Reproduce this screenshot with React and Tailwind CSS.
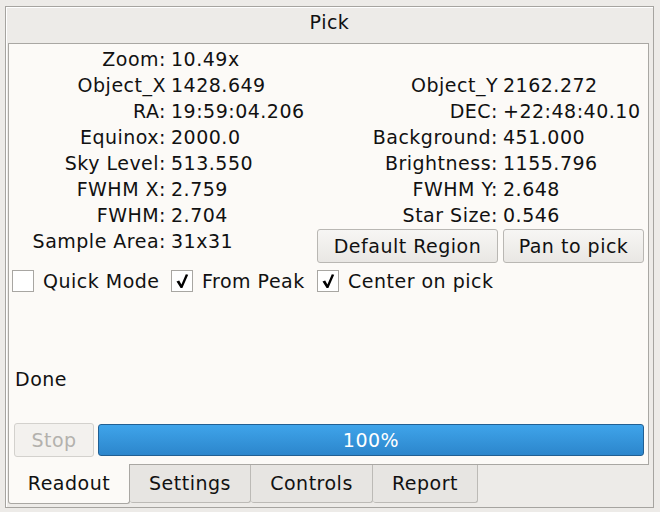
import React from "react";

const rows = [
  ["Zoom:", "10.49x", "", ""],
  ["Object_X", "1428.649", "Object_Y", "2162.272"],
  ["RA:", "19:59:04.206", "DEC:", "+22:48:40.10"],
  ["Equinox:", "2000.0", "Background:", "451.000"],
  ["Sky Level:", "513.550", "Brightness:", "1155.796"],
  ["FWHM X:", "2.759", "FWHM Y:", "2.648"],
  ["FWHM:", "2.704", "Star Size:", "0.546"],
];

function CheckBox({ checked, label }) {
  return (
    <div className="h-[22px] leading-[22px] flex items-center gap-[9px]">
      <div className="w-[22px] h-[22px] border border-[#a8a6a2] bg-white flex items-center justify-center">
        {checked && (
          <svg width="20" height="20" viewBox="0 0 20 20">
            <path d="M4.5 10.5 L7.2 9.6 L9.4 13.6 L13.8 3.2 L16.2 3.8 L10.4 17 L8.6 17 Z" fill="#000" />
          </svg>
        )}
      </div>
      <span>{label}</span>
    </div>
  );
}

function Button({ children, className = "" }) {
  return (
    <div
      className={`h-[34px] flex items-center justify-center rounded-[3px] border border-[#b9b7b3] bg-gradient-to-b from-[#f7f6f4] to-[#e9e7e4] ${className}`}
    >
      {children}
    </div>
  );
}

export default function App() {
  return (
    <div className="w-[660px] h-[512px] bg-[#edebe8] pl-[5px] pt-[6px] font-['DejaVu_Sans',sans-serif] text-[19px] tracking-[0.5px] text-[#111] overflow-hidden">
      <div className="w-[649px] h-[502px] border border-[#a6a4a0] shadow-[inset_1px_1px_0_#ffffff]">
        {/* titulo */}
        <div className="h-[30px] flex items-center justify-center">Pick</div>

        <div className="ml-[2px] mt-[6px] w-[641px] h-[422px] border border-[#a9a7a3] bg-[#fcfaf7] pt-[2px]">
          <div className="grid grid-cols-[157px_141px_181px_141px] gap-x-[5px] auto-rows-[26px] leading-[26px]">
            {rows.map((r, i) => (
              <React.Fragment key={i}>
                <div className="text-right whitespace-nowrap">{r[0]}</div>
                <div className="whitespace-nowrap">{r[1]}</div>
                <div className="text-right whitespace-nowrap">{r[2]}</div>
                <div className="whitespace-nowrap">{r[3]}</div>
              </React.Fragment>
            ))}
          </div>

          <div className="grid grid-cols-[157px_141px_181px_141px] gap-x-[5px] h-[36px] items-start leading-[26px]">
            <div className="text-right whitespace-nowrap">Sample Area:</div>
            <div>31x31</div>
            <Button className="mt-[1px]">Default Region</Button>
            <Button className="mt-[1px]">Pan to pick</Button>
          </div>

          <div className="grid grid-cols-[157px_141px_181px_141px] gap-x-[5px] mt-[6px] h-[22px] leading-[22px]">
            <div className="ml-[3px]">
              <CheckBox checked={false} label="Quick Mode" />
            </div>
            <CheckBox checked label="From Peak" />
            <div className="col-span-2">
              <CheckBox checked label="Center on pick" />
            </div>
          </div>

          <div className="mt-[74px] ml-[6px] h-[26px] leading-[26px]">Done</div>

          <div className="mt-[31px] ml-[5px] flex items-center gap-[4px]">
            <div className="w-[80px] h-[34px] flex items-center justify-center rounded-[3px] border border-[#d3d1cd] bg-[#f3f1ee] text-[#b3b1ad]">
              Stop
            </div>
            <div className="w-[546px] h-[32px] rounded-[3px] border border-[#215f92] bg-gradient-to-b from-[#3fa4ea] to-[#2c86cc] flex items-center justify-center text-white">
              100%
            </div>
          </div>
        </div>

        {/* abas */}
        <div className="ml-[2px] flex items-start">
          <div className="mt-[-1px] w-[122px] h-[40px] bg-[#fcfaf7] border-x border-b border-[#a9a7a3] rounded-b-[3px] flex items-center justify-center">
            Readout
          </div>
          <div className="w-[121px] h-[38px] bg-[#e7e5e2] border-r border-b border-[#bcbab6] rounded-b-[3px] flex items-center justify-center">
            Settings
          </div>
          <div className="w-[122px] h-[38px] bg-[#e7e5e2] border-r border-b border-[#bcbab6] rounded-b-[3px] flex items-center justify-center">
            Controls
          </div>
          <div className="w-[105px] h-[38px] bg-[#e7e5e2] border-r border-b border-[#bcbab6] rounded-b-[3px] flex items-center justify-center">
            Report
          </div>
        </div>
      </div>
    </div>
  );
}
